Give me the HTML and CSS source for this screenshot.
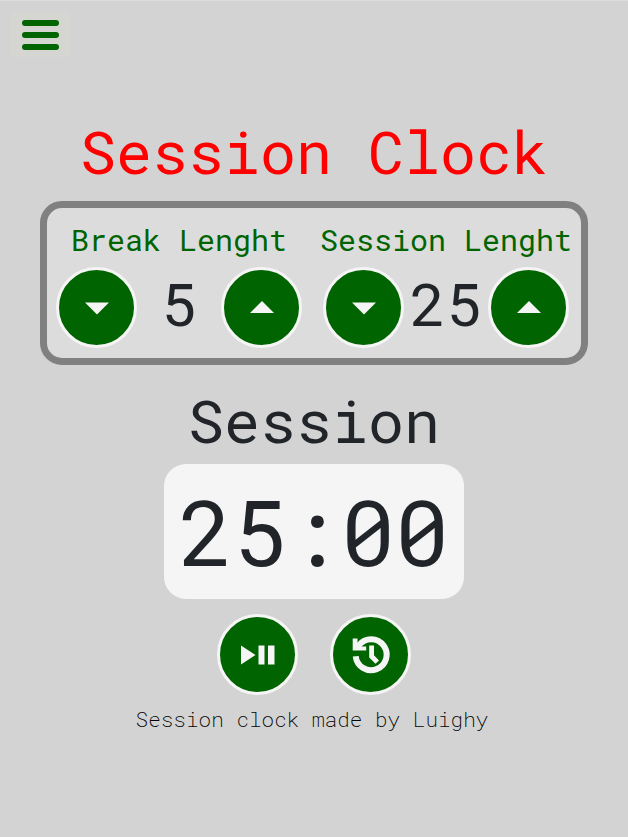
FILE: index.html
```html
<!DOCTYPE html>
<html lang="en">
<head>
<meta charset="utf-8">
<meta name="viewport" content="width=device-width, initial-scale=1">
<title>Session Clock</title>
<link rel="stylesheet" href="styles.css">
</head>
<body>
<header class="topbar">
  <button class="menu" type="button" aria-label="Menu">
    <span class="menu-bar"></span>
    <span class="menu-bar"></span>
    <span class="menu-bar"></span>
  </button>
</header>
<main class="clock">
  <h1 class="title">Session Clock</h1>
  <div class="settings">
    <section class="setting">
      <h2 class="setting-label">Break Lenght</h2>
      <div class="stepper">
        <button class="round" type="button" aria-label="Decrease break"><svg class="icon" viewBox="0 0 40 40"><path d="M8 14.500h24L20 26.500z"/></svg></button>
        <span class="value">5</span>
        <button class="round" type="button" aria-label="Increase break"><svg class="icon" viewBox="0 0 40 40"><path d="M8 25h24L20 13z"/></svg></button>
      </div>
    </section>
    <section class="setting">
      <h2 class="setting-label">Session Lenght</h2>
      <div class="stepper">
        <button class="round" type="button" aria-label="Decrease session"><svg class="icon" viewBox="0 0 40 40"><path d="M8 14.500h24L20 26.500z"/></svg></button>
        <span class="value">25</span>
        <button class="round" type="button" aria-label="Increase session"><svg class="icon" viewBox="0 0 40 40"><path d="M8 25h24L20 13z"/></svg></button>
      </div>
    </section>
  </div>
  <h2 class="phase">Session</h2>
  <div class="display">25:00</div>
  <div class="controls">
    <button class="round" type="button" aria-label="Start or pause"><svg class="icon" viewBox="0 0 40 40"><path d="M3 10.500v19L17.500 20zM20.500 10.500h6v19h-6zM30 10.500h6.500v19H30z"/></svg></button>
    <button class="round" type="button" aria-label="Reset"><svg class="icon" viewBox="0 0 40 40"><path class="ring" d="M4.700 21.200A15.500 15.500 0 1 0 8 10"/><path d="M1.700 3.500H6.500V8L11 11.500h4.200v4H1.700z"/><path d="M18.200 10.500H23v9.700l5 5.300-3.500 3.300-6.300-6.300z"/></svg></button>
  </div>
</main>
<footer class="credit">Session clock made by Luighy</footer>
</body>
</html>
```
FILE: styles.css
```css
* {
  box-sizing: border-box;
}

body {
  margin: 0;
  min-height: 100vh;
  border-top: 1px solid #dedede;
  background: #d3d3d3;
  color: #212529;
  font-family: "Roboto Mono", "Liberation Mono", monospace;
}

h1,
h2 {
  margin: 0;
  font-weight: 400;
}

.topbar {
  padding: 11px;
}

.menu {
  display: flex;
  flex-direction: column;
  gap: 6px;
  padding: 8px 11px 7px;
  border: 0;
  background: #d5d6d1;
}

.menu-bar {
  width: 37px;
  height: 6px;
  border-radius: 3px;
  background: #006400;
}

.clock {
  display: flex;
  flex-direction: column;
  align-items: center;
  padding: 47px 40px 0;
}

.title {
  color: #f00;
  font-size: 60px;
  line-height: 72px;
}

.settings {
  display: grid;
  grid-template-columns: 1fr 1fr;
  width: 100%;
  max-width: 548px;
  margin: 14px 0 19px;
  padding: 14px 0 10px;
  border: 7px solid #808080;
  border-radius: 22px;
  background: #dcdcdc;
}

.setting {
  display: flex;
  flex-direction: column;
  align-items: center;
  gap: 9px;
  padding-right: 3px;
}

.setting-label {
  color: #006400;
  font-size: 30px;
  line-height: 36px;
  white-space: nowrap;
}

.stepper {
  display: flex;
  align-items: flex-start;
}

.value {
  width: 84px;
  display: flex;
  justify-content: center;
  font-size: 60px;
  line-height: 72px;
}

.round {
  display: flex;
  align-items: center;
  justify-content: center;
  width: 81px;
  height: 81px;
  padding: 0;
  border: 3px solid #f5f5f5;
  border-radius: 50%;
  background: #006400;
  color: #f5f5f5;
}

.icon {
  width: 40px;
  height: 40px;
  fill: currentColor;
}

.ring {
  fill: none;
  stroke: currentColor;
  stroke-width: 6;
}

.phase {
  font-size: 60px;
  line-height: 72px;
}

.display {
  width: 300px;
  margin: 8px 0 15px;
  border-radius: 22px;
  background: #f5f5f5;
  font-size: 90px;
  line-height: 135px;
  text-align: center;
}

.controls {
  display: flex;
  gap: 32px;
}

.credit {
  padding: 12px 4px 0 0;
  color: #000;
  font-size: 21px;
  font-weight: 200;
  line-height: 24px;
  text-align: center;
}
```
